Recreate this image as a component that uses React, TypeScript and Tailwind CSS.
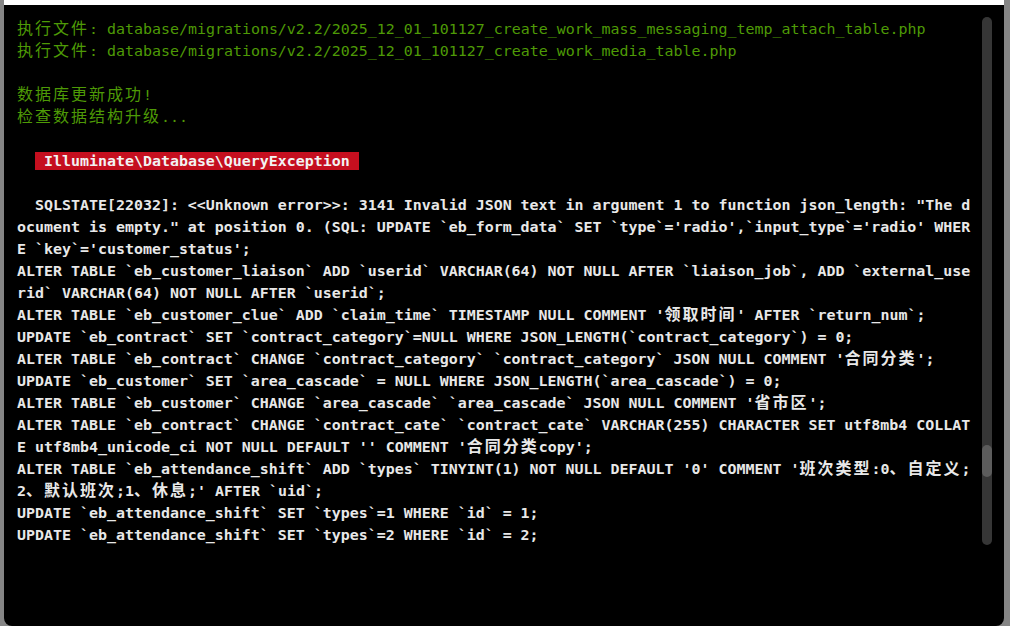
import { Fragment } from 'react';

type Line = { text: string; tone: 'ok' | 'sql' | 'badge' | 'blank' };

const LINES: Line[] = [
  { tone: 'ok', text: '执行文件: database/migrations/v2.2/2025_12_01_101127_create_work_mass_messaging_temp_attach_table.php' },
  { tone: 'ok', text: '执行文件: database/migrations/v2.2/2025_12_01_101127_create_work_media_table.php' },
  { tone: 'blank', text: '' },
  { tone: 'ok', text: '数据库更新成功!' },
  { tone: 'ok', text: '检查数据结构升级...' },
  { tone: 'blank', text: '' },
  { tone: 'badge', text: 'Illuminate\\Database\\QueryException' },
  { tone: 'blank', text: '' },
  { tone: 'sql', text: '  SQLSTATE[22032]: <<Unknown error>>: 3141 Invalid JSON text in argument 1 to function json_length: "The d' },
  { tone: 'sql', text: 'ocument is empty." at position 0. (SQL: UPDATE `eb_form_data` SET `type`=\'radio\',`input_type`=\'radio\' WHER' },
  { tone: 'sql', text: "E `key`='customer_status';" },
  { tone: 'sql', text: 'ALTER TABLE `eb_customer_liaison` ADD `userid` VARCHAR(64) NOT NULL AFTER `liaison_job`, ADD `external_use' },
  { tone: 'sql', text: 'rid` VARCHAR(64) NOT NULL AFTER `userid`;' },
  { tone: 'sql', text: "ALTER TABLE `eb_customer_clue` ADD `claim_time` TIMESTAMP NULL COMMENT '领取时间' AFTER `return_num`;" },
  { tone: 'sql', text: 'UPDATE `eb_contract` SET `contract_category`=NULL WHERE JSON_LENGTH(`contract_category`) = 0;' },
  { tone: 'sql', text: "ALTER TABLE `eb_contract` CHANGE `contract_category` `contract_category` JSON NULL COMMENT '合同分类';" },
  { tone: 'sql', text: 'UPDATE `eb_customer` SET `area_cascade` = NULL WHERE JSON_LENGTH(`area_cascade`) = 0;' },
  { tone: 'sql', text: "ALTER TABLE `eb_customer` CHANGE `area_cascade` `area_cascade` JSON NULL COMMENT '省市区';" },
  { tone: 'sql', text: 'ALTER TABLE `eb_contract` CHANGE `contract_cate` `contract_cate` VARCHAR(255) CHARACTER SET utf8mb4 COLLAT' },
  { tone: 'sql', text: "E utf8mb4_unicode_ci NOT NULL DEFAULT '' COMMENT '合同分类copy';" },
  { tone: 'sql', text: "ALTER TABLE `eb_attendance_shift` ADD `types` TINYINT(1) NOT NULL DEFAULT '0' COMMENT '班次类型:0、自定义;" },
  { tone: 'sql', text: "2、默认班次;1、休息;' AFTER `uid`;" },
  { tone: 'sql', text: 'UPDATE `eb_attendance_shift` SET `types`=1 WHERE `id` = 1;' },
  { tone: 'sql', text: 'UPDATE `eb_attendance_shift` SET `types`=2 WHERE `id` = 2;' },
];

// wide glyphs take two cells in the console, so pad them out
const WIDE = /([\u3000-\u303f\u4e00-\u9fff\uff00-\uffef]+)/;

function Cells({ text }: { text: string }) {
  return (
    <>
      {text.split(WIDE).map((part, i) =>
        WIDE.test(part) ? (
          <span key={i} className="text-[16px] tracking-[2px]">{part}</span>
        ) : (
          <Fragment key={i}>{part}</Fragment>
        )
      )}
    </>
  );
}

export default function App() {
  return (
    <div className="h-[626px] w-[1010px] overflow-hidden bg-[#858585] pl-[4px] pr-[6px]">
      <div className="flex h-full flex-col">
        <div className="h-[5px] bg-white" />
        <div className="relative flex-1 rounded-b-[8px] bg-black pl-[13px] pt-[13px]">
          <div
            className="whitespace-pre text-[14.95px] leading-[22px]"
            style={{ fontFamily: '"DejaVu Sans Mono", "Noto Sans CJK SC", monospace' }}
          >
            {LINES.map((line, i) => {
              if (line.tone === 'blank') return <div key={i} className="h-[22px]" />;
              if (line.tone === 'badge')
                return (
                  <div key={i} className="h-[22px]">
                    {'  '}
                    <span className="bg-[#c50f1f] font-bold text-[#f2f2f2]">{` ${line.text} `}</span>
                  </div>
                );
              return (
                <div
                  key={i}
                  className={line.tone === 'ok' ? 'h-[22px] text-[#4e9a06]' : 'h-[22px] font-bold text-[#e8e8e8]'}
                >
                  <Cells text={line.text} />
                </div>
              );
            })}
          </div>

          {/* scrollbar */}
          <div className="absolute left-[978px] top-[12px] h-[528px] w-[10px] rounded-full bg-[#363636]">
            <div className="mt-[428px] h-[32px] w-[10px] rounded-full bg-[#5c5c5c]" />
          </div>
        </div>
      </div>
    </div>
  );
}
